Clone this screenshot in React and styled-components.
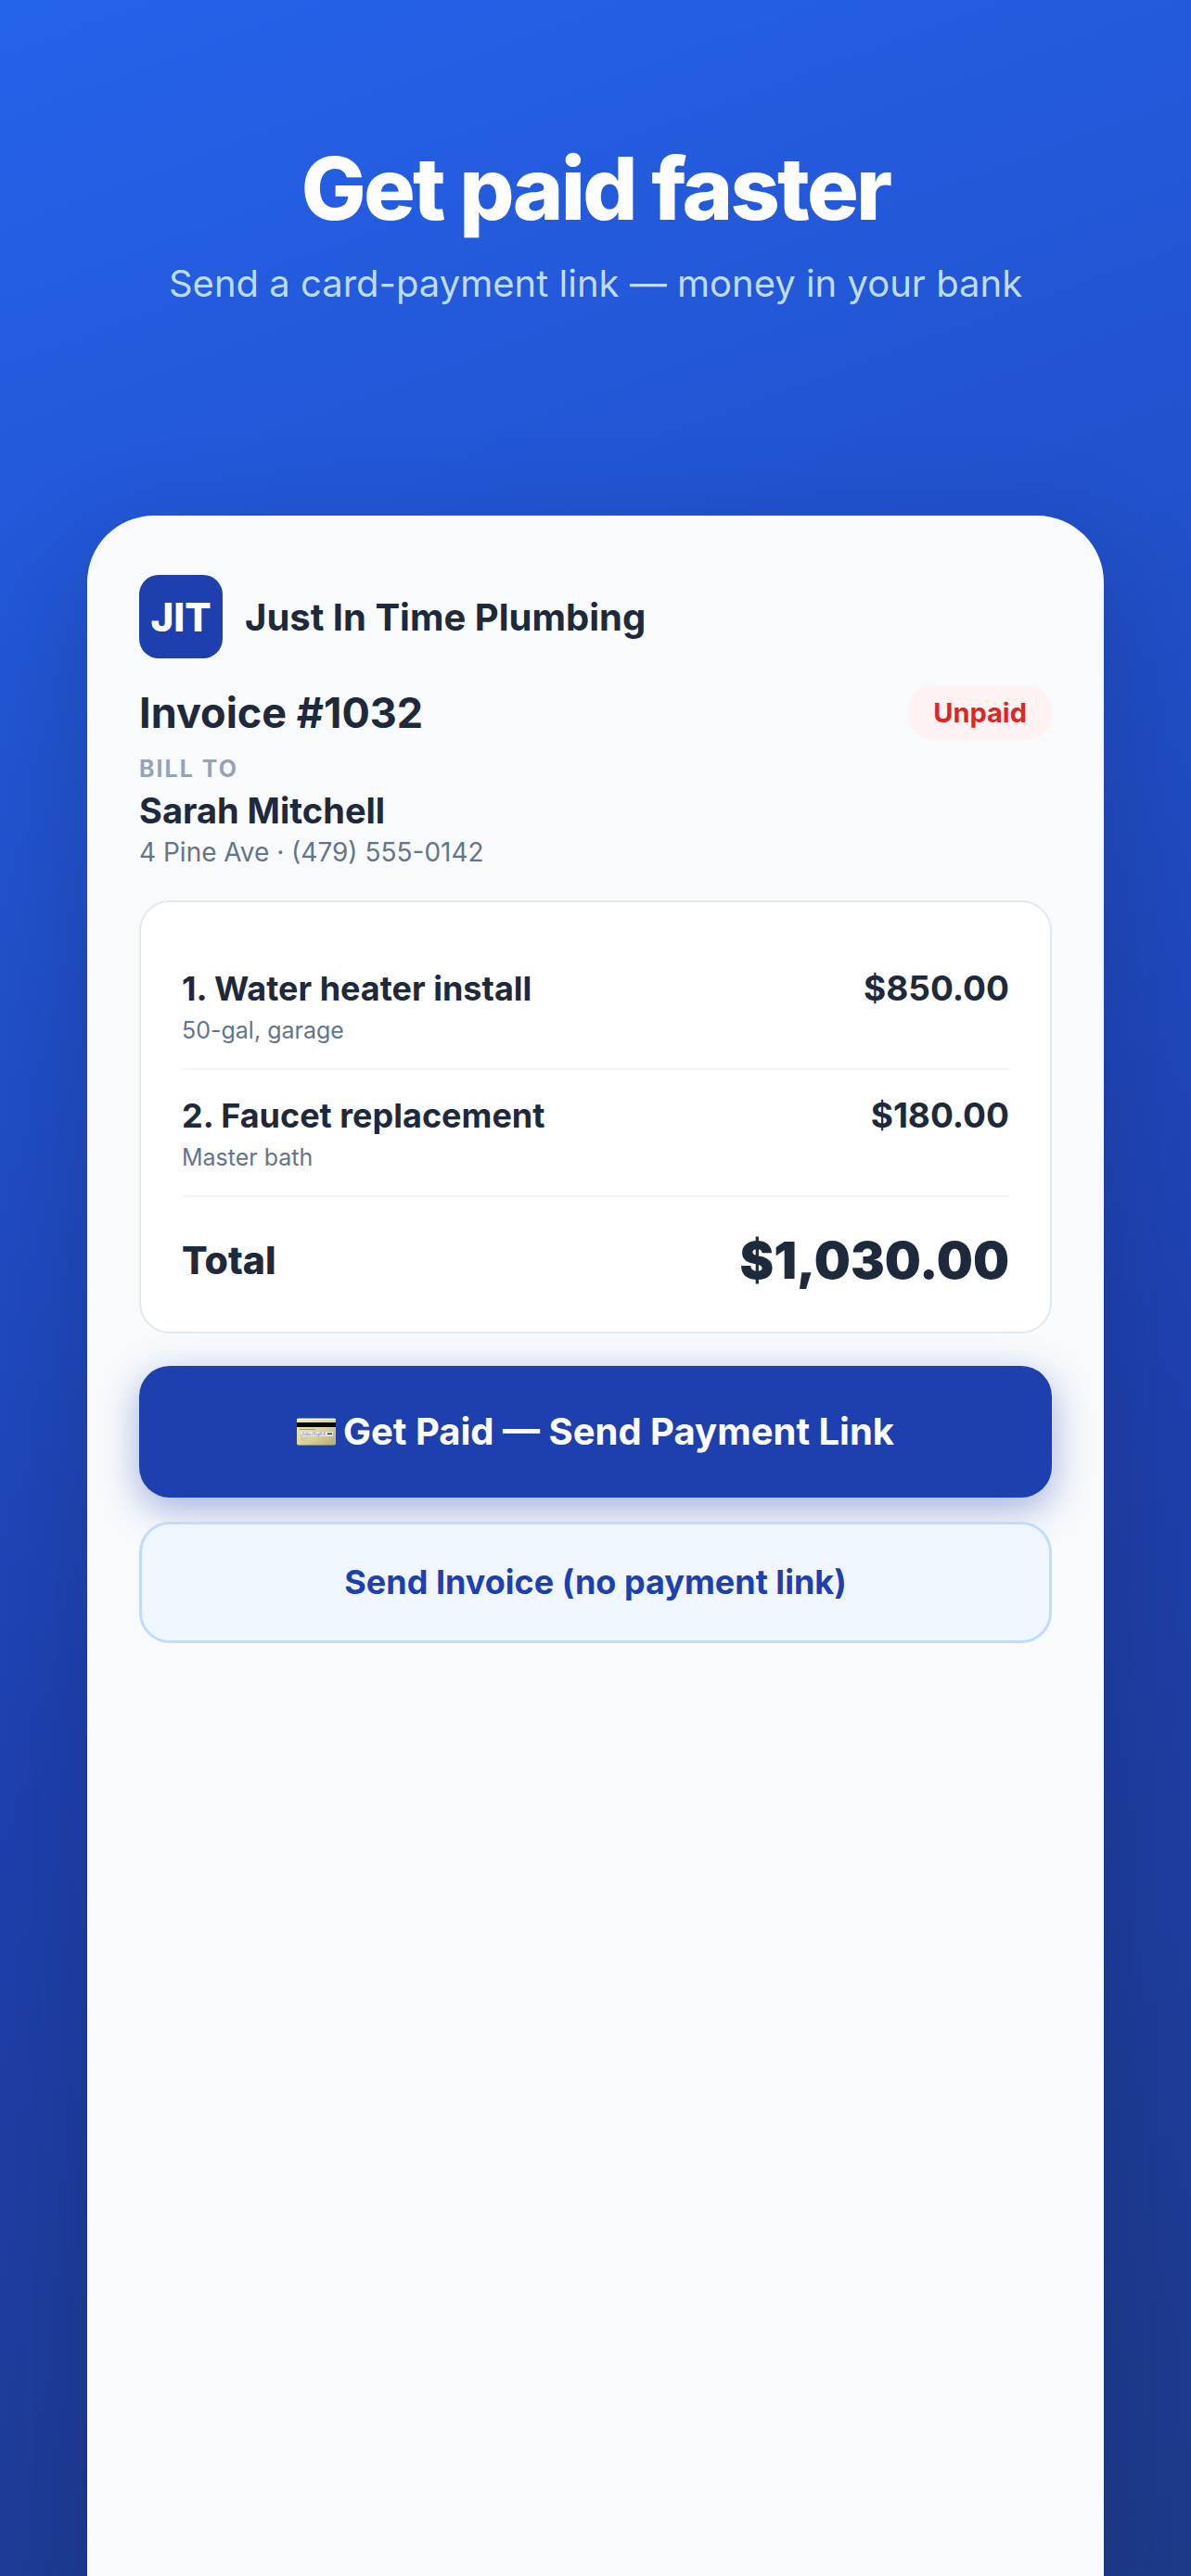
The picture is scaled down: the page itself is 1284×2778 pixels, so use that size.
import styled, { createGlobalStyle } from "styled-components";

const GlobalStyle = createGlobalStyle`
  * {
    box-sizing: border-box;
  }

  body {
    margin: 0;
    font-family: Inter, "Liberation Sans", sans-serif;
    color: #1e293b;
  }

  h1, h2, h3, p, ul {
    margin: 0;
    padding: 0;
  }
`;

const Wrap = styled.div`
  min-height: 100vh;
  display: flex;
  flex-direction: column;
  overflow: hidden;
  background: linear-gradient(160deg, #2563eb 0%, #1e40af 60%, #1e3a8a 100%);
`;

const Hero = styled.header`
  padding: 148px 60px 225px;
  text-align: center;
`;

const HeroTitle = styled.h1`
  font-size: 93px;
  line-height: 110px;
  font-weight: 800;
  letter-spacing: -0.03em;
  color: #fff;
`;

const HeroText = styled.p`
  margin-top: 23px;
  font-size: 40px;
  line-height: 50px;
  color: #bfdbfe;
`;

const Sheet = styled.main`
  flex: 1;
  margin: 0 94px;
  padding: 64px 56px;
  border-radius: 72px 72px 0 0;
  background: #f8fafc;
  box-shadow: 0 36px 120px rgba(15, 23, 42, 0.22);
`;

const Company = styled.div`
  display: flex;
  align-items: center;
  gap: 24px;
`;

const Logo = styled.div`
  width: 90px;
  height: 90px;
  border-radius: 21px;
  display: flex;
  align-items: center;
  justify-content: center;
  background: #1e40af;
  color: #fff;
  font-size: 42px;
  font-weight: 800;
`;

const CompanyName = styled.h2`
  font-size: 40px;
  font-weight: 700;
`;

const InvoiceHead = styled.div`
  margin-top: 29px;
  display: flex;
  align-items: center;
  justify-content: space-between;
`;

const InvoiceTitle = styled.h3`
  font-size: 45px;
  line-height: 54px;
  font-weight: 700;
`;

const Badge = styled.span`
  padding: 11px 27px;
  border-radius: 27px;
  background: #fef2f2;
  color: #dc2626;
  font-size: 29px;
  line-height: 37px;
  font-weight: 700;
`;

const Label = styled.p`
  margin-top: 15px;
  font-size: 25px;
  line-height: 32px;
  font-weight: 700;
  letter-spacing: 2px;
  text-transform: uppercase;
  color: #94a3b8;
`;

const Customer = styled.p`
  margin-top: 6px;
  font-size: 38px;
  line-height: 46px;
  font-weight: 700;
`;

const Address = styled.p`
  margin-top: 4px;
  font-size: 28px;
  line-height: 36px;
  color: #64748b;
`;

const Card = styled.section`
  margin-top: 34px;
  padding: 44px;
  border: 2px solid #e2e8f0;
  border-radius: 33px;
  background: #fff;
`;

const Items = styled.ul`
  list-style: none;
`;

const Item = styled.li`
  display: flex;
  justify-content: space-between;
  padding: 26px 0 25px;
  border-bottom: 2px solid #f1f5f9;
  font-size: 36px;
  line-height: 46px;
  font-weight: 700;
`;

const ItemNote = styled.p`
  margin-top: 6px;
  font-size: 25px;
  line-height: 32px;
  font-weight: 400;
  color: #64748b;
`;

const ItemPrice = styled.span`
  font-size: 37px;
`;

const Total = styled.div`
  display: flex;
  align-items: center;
  justify-content: space-between;
  padding-top: 35px;
  font-size: 41px;
  line-height: 66px;
  font-weight: 800;
`;

const TotalPrice = styled.span`
  font-size: 55px;
  font-weight: 900;
`;

const Button = styled.button`
  width: 100%;
  display: flex;
  align-items: center;
  justify-content: center;
  gap: 8px;
  border-radius: 33px;
  font-family: inherit;
  font-weight: 700;
  cursor: pointer;
`;

const PayButton = styled(Button)`
  margin-top: 35px;
  padding: 46px 24px;
  border: 0;
  background: #1e40af;
  color: #fff;
  font-size: 40px;
  line-height: 50px;
  box-shadow: 0 12px 42px rgba(30, 64, 175, 0.4);
`;

const SendButton = styled(Button)`
  margin-top: 26px;
  padding: 39px 24px;
  border: 3px solid #bfdbfe;
  background: #eff6ff;
  color: #1e40af;
  font-size: 36px;
  line-height: 47px;
`;

const items = [
  { id: 1, name: "Water heater install", note: "50-gal, garage", price: 850 },
  { id: 2, name: "Faucet replacement", note: "Master bath", price: 180 },
];

const money = (value) =>
  value.toLocaleString("en-US", { style: "currency", currency: "USD" });

const CreditCard = () => (
  <svg width="42" height="30" viewBox="0 0 42 30" aria-hidden="true">
    <defs>
      <linearGradient id="gold" x1="0" y1="0" x2="1" y2="1">
        <stop offset="0" stopColor="#f3eab2" />
        <stop offset="0.5" stopColor="#e0d69c" />
        <stop offset="1" stopColor="#b8aa70" />
      </linearGradient>
    </defs>
    <rect width="42" height="29" y="0.5" rx="2" fill="url(#gold)" />
    <rect width="42" height="1" y="1" rx="0.5" fill="#fdf9d8" />
    <rect width="42" height="5" y="5" fill="#0a0a05" />
    <rect width="17" height="1" x="3" y="12" fill="#a79d6c" />
    <rect width="35" height="5" x="4" y="15" fill="#e6e5e2" />
    <path
      d="M4 19c3 1 3-1 3-4M8 19c0-2 2-2 2 0M11 15v4c0-2 2-2 2 0l1-2v2M16 19l3-4 1 4M21 17l1 2 2-2-1 4M24 19l2-4v4M27 18c2-1 2 1 3-3v4"
      fill="none"
      stroke="#86a0cf"
      strokeWidth="0.8"
    />
    <rect width="5" height="1.5" x="33" y="16.5" fill="#333" />
    <path d="M4 22h8M4 24h6" stroke="#c4b985" strokeWidth="0.8" />
  </svg>
);

export default function App() {
  const total = items.reduce((sum, item) => sum + item.price, 0);

  return (
    <>
      <GlobalStyle />
      <Wrap>
        <Hero>
          <HeroTitle>Get paid faster</HeroTitle>
          <HeroText>Send a card-payment link — money in your bank</HeroText>
        </Hero>

        <Sheet>
          <Company>
            <Logo>JIT</Logo>
            <CompanyName>Just In Time Plumbing</CompanyName>
          </Company>

          <InvoiceHead>
            <InvoiceTitle>Invoice #1032</InvoiceTitle>
            <Badge>Unpaid</Badge>
          </InvoiceHead>

          <Label>Bill to</Label>
          <Customer>Sarah Mitchell</Customer>
          <Address>4 Pine Ave · (479) 555-0142</Address>

          <Card>
            <Items>
              {items.map((item) => (
                <Item key={item.id}>
                  <div>
                    {item.id}. {item.name}
                    <ItemNote>{item.note}</ItemNote>
                  </div>
                  <ItemPrice>{money(item.price)}</ItemPrice>
                </Item>
              ))}
            </Items>
            <Total>
              <span>Total</span>
              <TotalPrice>{money(total)}</TotalPrice>
            </Total>
          </Card>

          <PayButton type="button">
            <CreditCard />
            Get Paid — Send Payment Link
          </PayButton>
          <SendButton type="button">Send Invoice (no payment link)</SendButton>
        </Sheet>
      </Wrap>
    </>
  );
}
